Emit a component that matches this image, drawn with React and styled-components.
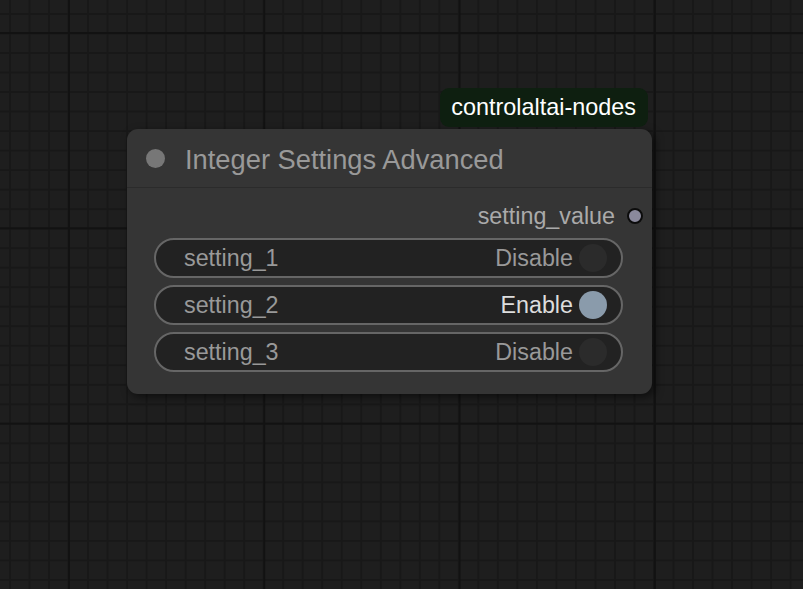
import React from "react";
import styled, { createGlobalStyle } from "styled-components";

const GlobalStyle = createGlobalStyle`
  html, body {
    margin: 0;
    padding: 0;
    background: #1e1e1e;
  }
  * { box-sizing: border-box; }
`;

const Canvas = styled.div`
  position: relative;
  width: 100vw;
  height: 100vh;
  overflow: hidden;
  font-family: "Liberation Sans", Arial, sans-serif;
  background-color: #1e1e1e;
  background-image:
    linear-gradient(to right, #121212 2px, transparent 2px),
    linear-gradient(to bottom, #121212 2px, transparent 2px),
    linear-gradient(to right, #181818 2px, transparent 2px),
    linear-gradient(to bottom, #181818 2px, transparent 2px);
  background-size: 195.3px 195.3px, 195.3px 195.3px, 19.53px 19.53px, 19.53px 19.53px;
  background-position: 68px 32px, 68px 32px, 9px 13px, 9px 13px;
`;

const Node = styled.div`
  position: absolute;
  left: ${(p) => p.x}px;
  top: ${(p) => p.y}px;
  width: ${(p) => p.w}px;
  background: #353535;
  border-radius: 11px;
  box-shadow: 3px 3px 8px rgba(0, 0, 0, 0.55);
`;

const Badge = styled.div`
  position: absolute;
  right: 4px;
  bottom: calc(100% + 2px);
  height: 39px;
  padding: 0 12px 0 11px;
  display: flex;
  align-items: center;
  background: #0e1f10;
  border-radius: 9px;
  color: #ffffff;
  font-size: 23.4px;
`;

const TitleBar = styled.div`
  height: 59px;
  display: flex;
  align-items: center;
  gap: 20px;
  padding-left: 19px;
  border-bottom: 1px solid #2b2b2b;
`;

const TitleDot = styled.span`
  width: 19px;
  height: 19px;
  border-radius: 50%;
  background: #777777;
  flex-shrink: 0;
`;

const Title = styled.span`
  color: #999999;
  font-size: 27.3px;
  line-height: 1;
  margin-top: 3px;
`;

const Body = styled.div`
  display: flex;
  flex-direction: column;
  gap: 7px;
  padding: 6px 29px 22px 27px;
`;

const OutputRow = styled.div`
  height: 44px;
  margin-bottom: -7px;
  margin-right: -20px;
  display: flex;
  align-items: center;
  justify-content: flex-end;
  gap: 12px;
  color: #aaaaaa;
  font-size: 23.3px;
`;

const Slot = styled.span`
  width: 16px;
  height: 16px;
  border-radius: 50%;
  background: #8a899c;
  border: 2px solid #0c0c0c;
  margin-top: -1px;
`;

const ToggleRow = styled.div`
  height: 40px;
  display: flex;
  align-items: center;
  padding: 0 14px 0 28px;
  background: #222222;
  border: 2px solid #666666;
  border-radius: 20px;
  font-size: 23.3px;
`;

const Label = styled.span`
  flex: 1;
  color: #999999;
`;

const Value = styled.span`
  color: ${(p) => (p.on ? "#dddddd" : "#999999")};
  margin-right: 6px;
`;

const Knob = styled.span`
  width: 28px;
  height: 28px;
  border-radius: 50%;
  background: ${(p) => (p.on ? "#8a9bab" : "#2b2b2b")};
`;

const settings = [
  { name: "setting_1", on: false },
  { name: "setting_2", on: true },
  { name: "setting_3", on: false },
];

export default function App() {
  return (
    <>
      <GlobalStyle />
      <Canvas>
        <Node x={127} y={129} w={525}>
          <Badge>controlaltai-nodes</Badge>
          <TitleBar>
            <TitleDot />
            <Title>Integer Settings Advanced</Title>
          </TitleBar>
          <Body>
            <OutputRow>
              setting_value
              <Slot />
            </OutputRow>
            {settings.map((s) => (
              <ToggleRow key={s.name}>
                <Label>{s.name}</Label>
                <Value on={s.on}>{s.on ? "Enable" : "Disable"}</Value>
                <Knob on={s.on} />
              </ToggleRow>
            ))}
          </Body>
        </Node>
      </Canvas>
    </>
  );
}
